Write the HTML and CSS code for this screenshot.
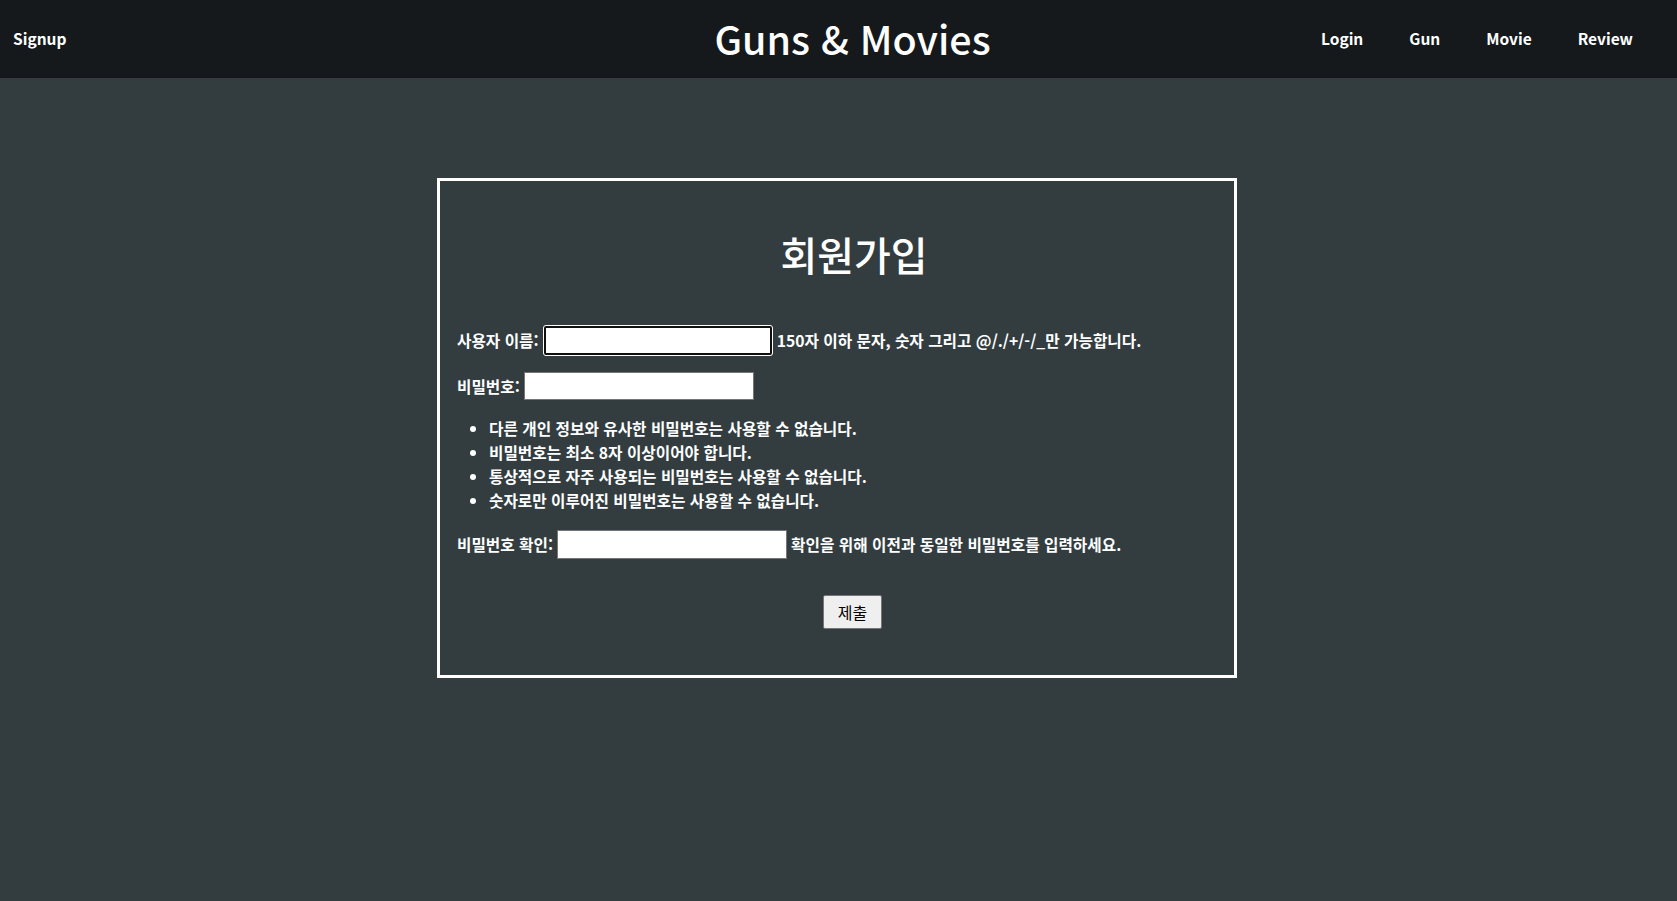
FILE: index.html
```html
<!DOCTYPE html>
<html lang="ko">
<head>
<meta charset="utf-8">
<title>Guns &amp; Movies - 회원가입</title>
<link rel="stylesheet" href="styles.css">
</head>
<body>
<header class="topbar">
  <div class="topbar-left"><a class="nav-link signup" href="#">Signup</a></div>
  <div class="brand">Guns &amp; Movies</div>
  <nav class="topbar-right">
    <a class="nav-link" href="#">Login</a>
    <a class="nav-link" href="#">Gun</a>
    <a class="nav-link" href="#">Movie</a>
    <a class="nav-link" href="#">Review</a>
  </nav>
</header>
<main class="page">
  <section class="card">
    <form class="signup-form">
      <h1 class="form-title">회원가입</h1>
      <div class="field-row first">
        <label class="field-label">사용자 이름:</label>
        <input class="field-input focused" type="text">
        <span class="helptext">150자 이하 문자, 숫자 그리고 @/./+/-/_만 가능합니다.</span>
      </div>
      <div class="field-row second">
        <label class="field-label">비밀번호:</label>
        <input class="field-input" type="password">
      </div>
      <ul class="rules">
        <li>다른 개인 정보와 유사한 비밀번호는 사용할 수 없습니다.</li>
        <li>비밀번호는 최소 8자 이상이어야 합니다.</li>
        <li>통상적으로 자주 사용되는 비밀번호는 사용할 수 없습니다.</li>
        <li>숫자로만 이루어진 비밀번호는 사용할 수 없습니다.</li>
      </ul>
      <div class="field-row third">
        <label class="field-label">비밀번호 확인:</label>
        <input class="field-input" type="password">
        <span class="helptext">확인을 위해 이전과 동일한 비밀번호를 입력하세요.</span>
      </div>
      <div class="actions">
        <button class="submit-btn" type="button">제출</button>
      </div>
    </form>
  </section>
</main>
</body>
</html>
```
FILE: styles.css
```css
html, body {
  margin: 0;
  padding: 0;
}
body {
  background: #333d40;
  color: #ffffff;
  font-family: "Noto Sans CJK KR", "Noto Sans", sans-serif;
  min-height: 901px;
}
.topbar {
  height: 78px;
  background: #15191b;
  display: flex;
  align-items: center;
  padding-bottom: 2px;
  box-sizing: border-box;
}
.topbar-left {
  flex: 1;
  padding-left: 13px;
}
.topbar-right {
  flex: 1;
  display: flex;
  justify-content: flex-end;
  padding-right: 21px;
}
.nav-link {
  color: #ffffff;
  text-decoration: none;
  font-weight: 700;
  font-size: 15.5px;
}
.topbar-right .nav-link {
  padding: 0 23px;
}
.brand {
  font-size: 39.4px;
  font-weight: 500;
  padding-left: 36px;
  line-height: 1;
}
.page {
  padding-top: 100px;
  padding-right: 3px;
}
.card {
  width: 800px;
  box-sizing: border-box;
  margin: 0 auto;
  border: 3px solid #ffffff;
  height: 500px;
}
.signup-form {
  width: 100%;
  padding: 0 17px;
  font-weight: 700;
  font-size: 15.7px;
}
.form-title {
  margin: 43px 0 0;
  text-align: center;
  font-size: 40px;
  font-weight: 500;
  line-height: 60px;
}
.field-row {
  display: flex;
  align-items: center;
  gap: 4px;
}
.field-row.first {
  margin-top: 40px;
  height: 32px;
}
.field-row.second {
  margin-top: 16px;
  height: 28px;
}
.field-row.third {
  margin-top: 17px;
  height: 29px;
}
.field-input {
  width: 230px;
  height: 28px;
  box-sizing: border-box;
  border: 1px solid #767676;
  background: #ffffff;
  border-radius: 0;
  margin: 0;
}
.field-row.third .field-input {
  height: 29px;
}
.field-input.focused {
  height: 31px;
  width: 230px;
  border: 1px solid #ffffff;
  border-radius: 3px;
  outline: 2px solid #101010;
  outline-offset: -3px;
}
.rules {
  margin: 17px 0 0;
  padding-left: 32px;
  line-height: 24px;
}
.actions {
  margin-top: 36px;
  display: flex;
  justify-content: center;
}
.submit-btn {
  width: 59px;
  height: 34px;
  margin-right: 3px;
  background: #efefef;
  border: 1px solid #767676;
  border-radius: 2px;
  color: #000000;
  font-family: "Noto Sans CJK KR", "Noto Sans", sans-serif;
  font-size: 16px;
  padding: 0;
}
```
